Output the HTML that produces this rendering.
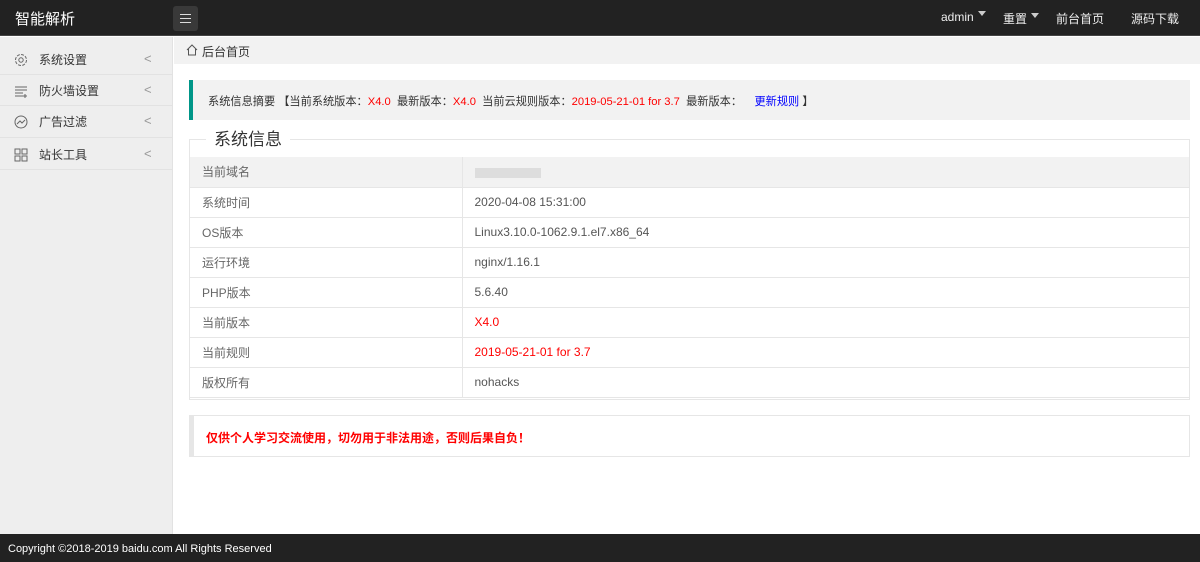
<!DOCTYPE html><html><head><meta charset="utf-8"><style>
*{margin:0;padding:0;box-sizing:border-box}
body{width:1200px;height:562px;overflow:hidden;font-family:"Liberation Sans","Noto Sans CJK SC",sans-serif;font-size:12px;color:#333;background:#fff;position:relative}
.hd{position:absolute;left:0;top:0;width:1200px;height:36px;background:#222;border-bottom:1px solid #444}
.logo{position:absolute;left:15px;top:8px;color:#fff;font-size:15px}
.tog{position:absolute;left:173px;top:6px;width:25px;height:25px;background:#393939;border-radius:3px}
.tog i{position:absolute;left:7px;width:11px;height:1px;background:#ddd}
.nav{position:absolute;top:10px;color:#eee;font-size:12px}
.tri{display:inline-block;border:4px solid transparent;border-top:5px solid #ccc;margin-left:4px;vertical-align:1px}
.sb{position:absolute;left:0;top:37px;width:173px;height:497px;background:#eee;border-right:1px solid #e2e2e2}
.it{position:absolute;left:0;width:173px;border-bottom:1px solid #e2e2e2;font-size:12px;color:#333}
.it span.t{position:absolute;left:39px;line-height:14px}
.it svg{position:absolute;left:14px}
.it .ar{position:absolute;left:144px;color:#999;font-size:13px;line-height:14px}
.bc{position:absolute;left:174px;top:37px;width:1026px;height:27px;background:#f2f2f2;font-size:12px;padding:6px 0 0 28px}
.sum{position:absolute;left:189px;top:80px;width:1001px;height:40px;background:#f2f2f2;border-left:4px solid #009688;padding:13px 0 0 15px;font-size:11.2px;white-space:nowrap}
.r{color:#f00}.b{color:#00f}
.fs{position:absolute;left:189px;top:139px;width:1001px;height:261px;border:1px solid #e6e6e6}
.lg{position:absolute;left:16px;top:-10px;background:#fff;padding:0 8px;font-size:17px;color:#333;line-height:20px}
table{position:absolute;left:0;top:17px;width:999px;border-collapse:collapse}
td{height:30px;border-bottom:1px solid #e6e6e6;padding-left:12px;font-size:12px;color:#666}
td+td{border-left:1px solid #e6e6e6;color:#555}
tr:first-child td{background:#f2f2f2}
.wr{position:absolute;left:189px;top:415px;width:1001px;height:42px;border:1px solid #e6e6e6;border-left:5px solid #e6e6e6;padding:13px 0 0 12px;color:#f00;font-weight:bold;font-size:12px}
.ft{position:absolute;left:0;top:534px;width:1200px;height:28px;background:#222;color:#fff;padding:9px 0 0 8px;font-size:11px}
</style></head><body>
<div class="hd"><div class="logo">智能解析</div>
<div class="tog"><i style="top:8px"></i><i style="top:12px"></i><i style="top:16px"></i></div>
<div class="nav" style="left:941px">admin<span class="tri"></span></div>
<div class="nav" style="left:1003px">重置<span class="tri"></span></div>
<div class="nav" style="left:1056px">前台首页</div>
<div class="nav" style="left:1131px">源码下载</div></div>
<div class="sb">
<div class="it" style="top:0;height:38px"><svg style="top:16px" width="14" height="14" viewBox="0 0 14 14" fill="none" stroke="#666"><circle cx="7" cy="7" r="2.2"/><circle cx="7" cy="7" r="5.5" stroke-dasharray="3 1.3"/></svg><span class="t" style="top:16px">系统设置</span><span class="ar" style="top:15px">&lt;</span></div>
<div class="it" style="top:38px;height:31px"><svg style="top:9px" width="14" height="14" viewBox="0 0 14 14" stroke="#666"><path d="M1 3h12M1 6h12M1 9h8M1 12h8M11 10v4M9 12h4"/></svg><span class="t" style="top:9px">防火墙设置</span><span class="ar" style="top:8px">&lt;</span></div>
<div class="it" style="top:69px;height:32px"><svg style="top:9px" width="14" height="14" viewBox="0 0 14 14" fill="none" stroke="#666"><circle cx="7" cy="7" r="6"/><path d="M3 9l3-3 2 2 3-3"/></svg><span class="t" style="top:9px">广告过滤</span><span class="ar" style="top:8px">&lt;</span></div>
<div class="it" style="top:101px;height:32px"><svg style="top:10px" width="14" height="14" viewBox="0 0 14 14" fill="none" stroke="#666"><rect x="1" y="1" width="5" height="5"/><rect x="8" y="1" width="5" height="5"/><rect x="1" y="8" width="5" height="5"/><rect x="8" y="8" width="5" height="5"/></svg><span class="t" style="top:10px">站长工具</span><span class="ar" style="top:9px">&lt;</span></div>
</div>
<div class="bc"><svg style="position:absolute;left:12px;top:7px" width="12" height="12" viewBox="0 0 12 12" fill="none" stroke="#555"><path d="M1 6L6 1l5 5M2.5 5v6h7V5"/></svg>后台首页</div>
<div class="sum">系统信息摘要 【当前系统版本：<span class="r">X4.0</span>&nbsp; 最新版本：<span class="r">X4.0</span>&nbsp; 当前云规则版本：<span class="r">2019-05-21-01 for 3.7</span>&nbsp; 最新版本：&nbsp; &nbsp; <span class="b">更新规则</span> 】</div>
<div class="fs"><div class="lg">系统信息</div>
<table>
<tr><td style="width:272px">当前域名</td><td><span style="display:inline-block;width:66px;height:10px;background:#ddd;vertical-align:middle"></span></td></tr>
<tr><td>系统时间</td><td>2020-04-08 15:31:00</td></tr>
<tr><td>OS版本</td><td>Linux3.10.0-1062.9.1.el7.x86_64</td></tr>
<tr><td>运行环境</td><td>nginx/1.16.1</td></tr>
<tr><td>PHP版本</td><td>5.6.40</td></tr>
<tr><td>当前版本</td><td class="r">X4.0</td></tr>
<tr><td>当前规则</td><td class="r">2019-05-21-01 for 3.7</td></tr>
<tr><td>版权所有</td><td>nohacks</td></tr>
</table></div>
<div class="wr">仅供个人学习交流使用，切勿用于非法用途，否则后果自负！</div>
<div class="ft">Copyright ©2018-2019 baidu.com All Rights Reserved</div>
</body></html>
